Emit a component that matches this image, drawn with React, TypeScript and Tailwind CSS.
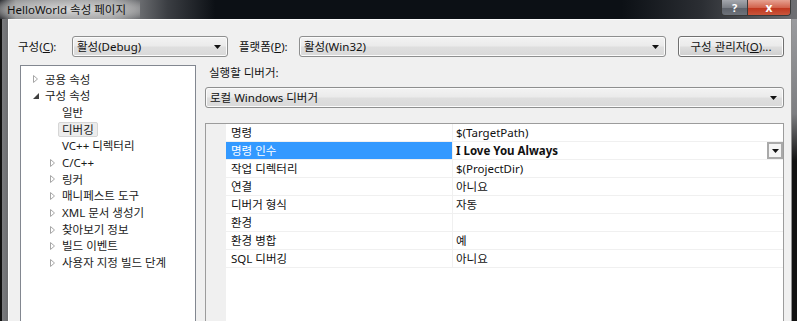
import React from 'react';

const treeItems = [
  { label: '공용 속성', level: 0, arrow: 'closed' },
  { label: '구성 속성', level: 0, arrow: 'open' },
  { label: '일반', level: 1, arrow: '' },
  { label: '디버깅', level: 1, arrow: '', selected: true },
  { label: 'VC++ 디렉터리', level: 1, arrow: '' },
  { label: 'C/C++', level: 1, arrow: 'closed' },
  { label: '링커', level: 1, arrow: 'closed' },
  { label: '매니페스트 도구', level: 1, arrow: 'closed' },
  { label: 'XML 문서 생성기', level: 1, arrow: 'closed' },
  { label: '찾아보기 정보', level: 1, arrow: 'closed' },
  { label: '빌드 이벤트', level: 1, arrow: 'closed' },
  { label: '사용자 지정 빌드 단계', level: 1, arrow: 'closed' },
];

const properties = [
  { name: '명령', value: '$(TargetPath)' },
  { name: '명령 인수', value: 'I Love You Always', selected: true },
  { name: '작업 디렉터리', value: '$(ProjectDir)' },
  { name: '연결', value: '아니요' },
  { name: '디버거 형식', value: '자동' },
  { name: '환경', value: '' },
  { name: '환경 병합', value: '예' },
  { name: 'SQL 디버깅', value: '아니요' },
];

function DownArrow() {
  return (
    <svg width="7" height="4" viewBox="0 0 7 4">
      <path d="M0 0h7L3.5 4z" fill="#111" />
    </svg>
  );
}

function TreeArrow({ kind }: { kind: string }) {
  if (kind === 'closed') {
    return (
      <svg width="5" height="8" viewBox="0 0 5 8">
        <path d="M0.5 0.5v7l4-3.5z" fill="none" stroke="#a6a6a6" strokeWidth="1" />
      </svg>
    );
  }
  if (kind === 'open') {
    return (
      <svg width="6" height="6" viewBox="0 0 6 6">
        <path d="M6 0v6H0z" fill="#404040" />
      </svg>
    );
  }
  return null;
}

function Combo({ text, className }: { text: string; className: string }) {
  return (
    <div
      className={`${className} h-[21px] flex items-center justify-between pl-[4px] pr-[6px] rounded-[3px] border border-[#8e8f8f] bg-[linear-gradient(#f3f3f3,#ebebeb_45%,#dedede_55%,#d9d9d9)] shadow-[inset_0_0_0_1px_#fbfbfb]`}
    >
      <span className="text-[#111]">{text}</span>
      <DownArrow />
    </div>
  );
}

export default function App() {
  return (
    <div className="w-[797px] h-[321px] overflow-hidden bg-black flex flex-col font-['Noto_Sans','Noto_Sans_CJK_KR',sans-serif] text-[11.5px] leading-none">
      {/* title bar */}
      <div className="h-[22px] flex items-start relative bg-[linear-gradient(90deg,#2a2c30_0%,#8e8f91_2%,#9a9b9d_14%,#3b3e43_21%,#0c1015_27%,#0c1015_78%,#2b2e33_88%,#6f7074_100%)]">
        <div className="h-[19px] pl-[7px] pr-[14px] flex items-center text-[#111] bg-[radial-gradient(ellipse_at_center,rgba(225,225,225,0.85),rgba(190,190,190,0.6)_65%,rgba(160,160,160,0)_100%)]">
          HelloWorld 속성 페이지
        </div>
        <div className="ml-auto mr-[6px] flex h-[16px] rounded-b-[4px] overflow-hidden border border-t-0 border-[#3a3a3a]">
          <div className="w-[26px] flex items-center justify-center text-white font-bold text-[11px] bg-[linear-gradient(#a4a7ad,#7c8087_50%,#5d6169_51%,#6e737b)] border-r border-[#3a3a3a]">
            ?
          </div>
          <div className="w-[42px] flex items-center justify-center text-white font-bold text-[12px] bg-[linear-gradient(#e6a191,#d2644e_50%,#c0341c_51%,#c9563c)]">
            x
          </div>
        </div>
      </div>

      {/* body with frame */}
      <div className="flex flex-1 bg-[linear-gradient(90deg,#111_0px,#111_2px,#7a7b7e_2px,#6d6e71_8px)]">
        <div className="w-[8px] shrink-0" />
        <div className="flex-1 bg-[#f0f0f0] border-t border-l border-[#fbfbfb] flex flex-col">
          {/* configuration row */}
          <div className="flex items-center pt-[16px] pl-[9px]">
            <span className="w-[54px] text-[#111]">
              구성(<span className="underline">C</span>):
            </span>
            <Combo text="활성(Debug)" className="w-[156px]" />
            <span className="ml-[11px] w-[60px] text-[#111]">
              플랫폼(<span className="underline">P</span>):
            </span>
            <Combo text="활성(Win32)" className="w-[367px]" />
            <div className="ml-[12px] w-[106px] h-[21px] flex items-center justify-center rounded-[3px] border border-[#707070] bg-[linear-gradient(#f2f2f2,#ebebeb_45%,#dddddd_55%,#cfcfcf)] shadow-[inset_0_0_0_1px_#fcfcfc] text-[#111]">
              구성 관리자(<span className="underline">O</span>)...
            </div>
          </div>

          <div className="flex mt-[8px] pl-[11px] h-[270px]">
            {/* tree */}
            <div className="w-[176px] h-full bg-white border border-[#828790] pt-[5px]">
              {treeItems.map((item) => (
                <div
                  key={item.label}
                  className={`h-[16.7px] flex items-center ${item.level === 0 ? 'pl-[11px]' : 'pl-[28px]'}`}
                >
                  <span className="w-[10px] flex items-center justify-start pl-[1px]">
                    <TreeArrow kind={item.arrow} />
                  </span>
                  <span
                    className={`px-[3px] h-[15px] flex items-center rounded-[2px] text-[#1a1a1a] ${
                      item.selected ? 'bg-[#ececec] border border-[#d6d6d6] -ml-[1px]' : 'border border-transparent -ml-[1px]'
                    }`}
                  >
                    {item.label}
                  </span>
                </div>
              ))}
            </div>

            {/* debugger panel */}
            <div className="ml-[9px] w-[579px] flex flex-col">
              <div className="h-[16px] flex items-center pl-[4px] text-[#111]">실행할 디버거:</div>
              <Combo text="로컬 Windows 디버거" className="mt-[6px] w-full" />
              <div className="mt-[15px] flex-1 flex border border-[#9c9c9c] bg-white">
                <div className="w-[20px] bg-[#f0f0f0] shrink-0" />
                <div className="flex-1 flex flex-col">
                  {properties.map((p) => (
                    <div key={p.name} className="h-[18px] flex border-b border-[#f0f0f0]">
                      <div
                        className={`w-[227px] shrink-0 flex items-center pl-[5px] border-r border-[#f0f0f0] ${
                          p.selected ? 'bg-[#3399ff] text-white' : 'text-[#111]'
                        }`}
                      >
                        {p.name}
                      </div>
                      <div className={`flex-1 flex items-center pl-[3px] text-[#111] ${p.selected ? 'font-bold' : ''}`}>
                        <span className="flex-1">{p.value}</span>
                        {p.selected && (
                          <span className="w-[16px] h-[17px] flex items-center justify-center border-2 border-[#a9a9a9] bg-[#f4f4f4]">
                            <DownArrow />
                          </span>
                        )}
                      </div>
                    </div>
                  ))}
                </div>
              </div>
            </div>
          </div>
        </div>
        <div className="w-[6px] shrink-0 border-l border-[#8f8f8f] bg-[linear-gradient(#9a9b9e,#7d7e81_30%,#111_45%,#111)]" />
      </div>
    </div>
  );
}
